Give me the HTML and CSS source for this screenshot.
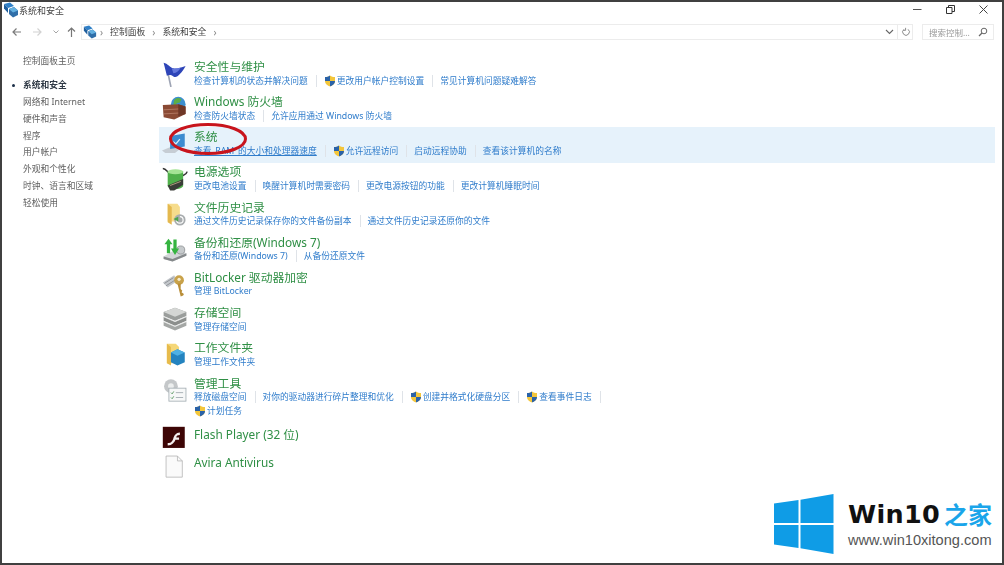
FILE: index.html
```html
<!DOCTYPE html>
<html lang="zh-CN">
<head>
<meta charset="utf-8">
<title>系统和安全</title>
<link rel="stylesheet" href="styles.css">
</head>
<body>
<svg width="0" height="0" class="defs">
  <defs>
    <symbol id="shield" viewBox="0 0 12 12">
      <path d="M6 .5C4.500 1.500 3 2 1 2v4c0 3 2.500 4.500 5 5.500 2.500-1 5-2.500 5-5.500V2C9 2 7.500 1.500 6 .5z" fill="#f3c63c"/>
      <path d="M6 .5v5.500H1V2C3 2 4.500 1.500 6 .5zM6 6h5c0 3-2.500 4.500-5 5.500z" fill="#2a62a8"/>
    </symbol>
    <symbol id="cp" viewBox="0 0 16 16">
      <path d="M1 2l6-1.500 4 3.500-6 2z" fill="#2f80c8"/>
      <path d="M1 2l4 4v5L1 6.500z" fill="#1f5f9e"/>
      <path d="M6 7l5-2 4 3.500V13l-5 2.500L6 12z" fill="#2f6ea8"/>
      <path d="M6 7l5-2 4 3.500-5 2z" fill="#63b0e0"/>
    </symbol>
  </defs>
</svg>
<div class="window">
  <header class="titlebar">
    <svg class="title-icon" width="16" height="16"><use href="#cp"/></svg>
    <span class="title-text">系统和安全</span>
    <div class="controls">
      <svg width="9" height="9" viewBox="0 0 9 9"><path d="M0 4.500h8.500" stroke="#555" fill="none"/></svg>
      <svg width="9" height="9" viewBox="0 0 9 9"><path d="M.5 2.500h5.500v6H.5zM2.500 2.500V.5h6v6H6" stroke="#333" fill="none"/></svg>
      <svg width="9" height="9" viewBox="0 0 9 9"><path d="M.5.500l8 8M8.500.500l-8 8" stroke="#444" fill="none"/></svg>
    </div>
  </header>
  <nav class="navbar">
    <svg class="nav-arrow" width="9" height="10" viewBox="0 0 9 10"><path d="M9 5H1M4.500 1.500L1 5l3.500 3.500" stroke="#7b7b7b" stroke-width="1.200" fill="none"/></svg>
    <svg class="nav-arrow dim" width="9" height="10" viewBox="0 0 9 10"><path d="M0 5h8M4.500 1.500L8 5 4.500 8.500" stroke="#d2d2d2" stroke-width="1.200" fill="none"/></svg>
    <svg class="nav-drop" width="6" height="6" viewBox="0 0 6 6"><path d="M.5 1.500L3 4l2.500-2.500" stroke="#a5a5a5" fill="none"/></svg>
    <svg class="nav-up" width="9" height="10" viewBox="0 0 9 10"><path d="M4.500 10V1M1 4.500L4.500 1 8 4.500" stroke="#777" stroke-width="1.200" fill="none"/></svg>
    <div class="address">
      <svg class="address-icon" width="14" height="14"><use href="#cp"/></svg>
      <span class="crumb-sep first">›</span>
      <span class="crumb">控制面板</span>
      <span class="crumb-sep">›</span>
      <span class="crumb">系统和安全</span>
      <span class="crumb-sep">›</span>
      <span class="address-end">
        <svg width="9" height="8" viewBox="0 0 9 8"><path d="M1 2l3.500 3.500L8 2" stroke="#666" stroke-width="1.100" fill="none"/></svg>
        <i class="address-rule"></i>
        <svg width="10" height="10" viewBox="0 0 12 12"><path d="M3.500 2.800a4 4 0 1 0 5 0M5.500 1v3H2.800" stroke="#777" fill="none"/></svg>
      </span>
    </div>
    <div class="search">
      <span>搜索控制...</span>
      <svg width="10" height="10" viewBox="0 0 10 10"><circle cx="6" cy="4" r="2.800" stroke="#666" fill="none"/><path d="M4 6L1 9" stroke="#666" stroke-width="1.300"/></svg>
    </div>
  </nav>
  <div class="content">
    <aside class="sidebar">
      <a class="side-home">控制面板主页</a>
      <ul class="side-list">
        <li class="current">系统和安全</li>
        <li>网络和 Internet</li>
        <li>硬件和声音</li>
        <li>程序</li>
        <li>用户帐户</li>
        <li>外观和个性化</li>
        <li>时钟、语言和区域</li>
        <li>轻松使用</li>
      </ul>
    </aside>
    <main class="main">
      <section class="cat">
        <svg class="cat-icon" width="26" height="26" viewBox="0 0 32 32">
          <path d="M11 32L5 4" stroke="#9ea4b4" stroke-width="2" fill="none"/>
          <path d="M2 2c5 1 8 6 12 7 4 1 9-1 15-3-2 4-4 7-7 10-3 3-5 5-8 3-3-2-5-2-8-1z" fill="#2e45b8"/>
          <path d="M12 9c3 1 7 0 11-1-2 4-5 7-9 7z" fill="#6478dc"/>
        </svg>
        <div class="cat-body">
          <h2>安全性与维护</h2>
          <div class="links"><a>检查计算机的状态并解决问题</a><a class="shielded"><svg width="12" height="12"><use href="#shield"/></svg>更改用户帐户控制设置</a><a>常见计算机问题疑难解答</a></div>
        </div>
      </section>
      <section class="cat">
        <svg class="cat-icon" width="26" height="26" viewBox="0 0 32 32">
          <circle cx="20" cy="10" r="9" fill="#3c8fd0"/>
          <path d="M15 5c3-3 6-3 9-1l-2 4-4 1-1 4-3-3z" fill="#5cae48"/>
          <path d="M1 11l19-1 9 3v9l-14 7-13-3z" fill="#8a4a34"/>
          <path d="M20 10l9 3v9l-9 3z" fill="#6e3727"/>
          <path d="M2 17l18-1M2 22l18-1" stroke="#b9806a" fill="none"/>
        </svg>
        <div class="cat-body">
          <h2>Windows 防火墙</h2>
          <div class="links"><a>检查防火墙状态</a><a>允许应用通过 Windows 防火墙</a></div>
        </div>
      </section>
      <section class="cat active">
        <svg class="cat-icon" width="26" height="26" viewBox="0 0 32 32">
          <path d="M0 24l12-5h14L16 27H4z" fill="#c6cdd4"/>
          <path d="M10 6l18-3v16l-18 3z" fill="#3d8bd0"/>
          <path d="M14 13l3 3 5-6" stroke="#d9ecfa" stroke-width="1.500" fill="none"/>
        </svg>
        <div class="cat-body">
          <h2>系统</h2>
          <div class="links"><a class="under">查看 RAM 的大小和处理器速度</a><a class="shielded"><svg width="12" height="12"><use href="#shield"/></svg>允许远程访问</a><a>启动远程协助</a><a>查看该计算机的名称</a></div>
        </div>
        <svg class="annotation" width="82" height="36" viewBox="0 0 82 36"><ellipse cx="41" cy="18" rx="37.500" ry="14.500" stroke="#c8141c" stroke-width="3" fill="none"/></svg>
      </section>
      <section class="cat">
        <svg class="cat-icon" width="26" height="26" viewBox="0 0 32 32">
          <path d="M1 3c3 0 5 3 7 5M31 7c-1 4-4 4-6 5" stroke="#333" stroke-width="1.800" fill="none"/>
          <path d="M7 6h19v19c-3 5-16 5-19 0z" fill="#4fb04a"/>
          <ellipse cx="16.500" cy="7" rx="9.500" ry="3" fill="#a4e494"/>
          <path d="M7 24l19-8v7l-11 7H10z" fill="#3a3d38"/>
          <path d="M10 24l13-5" stroke="#c8b68a" fill="none"/>
        </svg>
        <div class="cat-body">
          <h2>电源选项</h2>
          <div class="links"><a>更改电池设置</a><a>唤醒计算机时需要密码</a><a>更改电源按钮的功能</a><a>更改计算机睡眠时间</a></div>
        </div>
      </section>
      <section class="cat">
        <svg class="cat-icon" width="26" height="26" viewBox="0 0 32 32">
          <path d="M7 2h12l3 4v18H7z" fill="#f6dc8c"/>
          <path d="M7 2l5 4v22l-5-3z" fill="#e4b84e"/>
          <circle cx="22" cy="22" r="7" fill="#a8acae"/>
          <path d="M18 22a4 4 0 1 0 4-4" stroke="#fff" stroke-width="1.400" fill="none"/>
          <path d="M14 21l6-3v6z" fill="#4ca54a"/>
        </svg>
        <div class="cat-body">
          <h2>文件历史记录</h2>
          <div class="links"><a>通过文件历史记录保存你的文件备份副本</a><a>通过文件历史记录还原你的文件</a></div>
        </div>
      </section>
      <section class="cat">
        <svg class="cat-icon" width="26" height="26" viewBox="0 0 32 32">
          <path d="M2 24l15-9 13 5v3l-17 7-11-3z" fill="#d3d6d8"/>
          <path d="M2 24l11 3 17-7v3l-17 7-11-3z" fill="#85898b"/>
          <circle cx="23" cy="16" r="5" fill="#c6cacc" stroke="#8c9092"/>
          <path d="M8 2l-5 7h3v11h4V9h3zM14 3v11h-3l5 8 5-8h-3V3z" fill="#35b440"/>
        </svg>
        <div class="cat-body">
          <h2>备份和还原(Windows 7)</h2>
          <div class="links"><a>备份和还原(Windows 7)</a><a>从备份还原文件</a></div>
        </div>
      </section>
      <section class="cat">
        <svg class="cat-icon" width="26" height="26" viewBox="0 0 32 32">
          <path d="M1 13l14-9 4 7-12 8z" fill="#c4c8cc"/>
          <path d="M3 14l11-7M5 17l11-7" stroke="#84888c" fill="none"/>
          <circle cx="21" cy="10" r="6" fill="#c9a24a"/>
          <path d="M19 14l4 16 3-1 1-2-3-2 1-2-2-2 0-7z" fill="#b98e38"/>
          <circle cx="21" cy="9" r="2" fill="#f6eecf"/>
        </svg>
        <div class="cat-body">
          <h2>BitLocker 驱动器加密</h2>
          <div class="links"><a>管理 BitLocker</a></div>
        </div>
      </section>
      <section class="cat">
        <svg class="cat-icon" width="26" height="26" viewBox="0 0 32 32">
          <path d="M2 6l14-5 14 5v5l-14 6-14-6z" fill="#9a9d9b"/>
          <path d="M2 6l14-5 14 5-14 6z" fill="#d4d6d4"/>
          <path d="M2 12l14 6 14-6v5l-14 6-14-6z" fill="#8c8f8d"/>
          <path d="M2 18l14 6 14-6v5l-14 6-14-6z" fill="#a4a7a5"/>
          <path d="M2 12l14 6 14-6M2 18l14 6 14-6" stroke="#e6e8e6" fill="none"/>
        </svg>
        <div class="cat-body">
          <h2>存储空间</h2>
          <div class="links"><a>管理存储空间</a></div>
        </div>
      </section>
      <section class="cat">
        <svg class="cat-icon" width="26" height="26" viewBox="0 0 32 32">
          <path d="M6 2h11l4 4v20H6z" fill="#f5d778"/>
          <path d="M6 2l5 4v23l-5-3z" fill="#e7bb4c"/>
          <path d="M11 13l8-4 9 4v12l-9 4-8-4z" fill="#2483bf"/>
          <path d="M11 13l8-4 9 4-9 4z" fill="#4eb0e3"/>
        </svg>
        <div class="cat-body">
          <h2>工作文件夹</h2>
          <div class="links"><a>管理工作文件夹</a></div>
        </div>
      </section>
      <section class="cat tools">
        <svg class="cat-icon" width="26" height="26" viewBox="0 0 32 32">
          <circle cx="11" cy="10" r="8.500" fill="#c4c7c9"/>
          <circle cx="11" cy="10" r="3.500" fill="#eceeee"/>
          <rect x="8.500" y="12.500" width="21" height="16" fill="#f7f8f8" stroke="#a2acb2"/>
          <path d="M11 18l1.500 1.500 2-3M11 24l1.500 1.500 2-3" stroke="#4a8f50" fill="none"/>
          <path d="M17 18h9M17 24h9" stroke="#9aa4aa" fill="none"/>
        </svg>
        <div class="cat-body">
          <h2>管理工具</h2>
          <div class="links"><a>释放磁盘空间</a><a>对你的驱动器进行碎片整理和优化</a><a class="shielded"><svg width="12" height="12"><use href="#shield"/></svg>创建并格式化硬盘分区</a><a class="shielded"><svg width="12" height="12"><use href="#shield"/></svg>查看事件日志</a><a class="tail"></a></div>
          <div class="links"><a class="shielded"><svg width="12" height="12"><use href="#shield"/></svg>计划任务</a></div>
        </div>
      </section>
      <section class="cat single">
        <svg class="cat-icon" width="26" height="26" viewBox="0 0 32 32">
          <rect x="1" y="1" width="27" height="26" fill="#3d0505"/>
          <path d="M7 21c5 0 6-3 7-6s3-7 8-7v3c-3 0-4 1-4.500 3H21v3h-4.500c-1 3-4 7-9.500 7z" fill="#f4eeee"/>
        </svg>
        <div class="cat-body">
          <h2>Flash Player (32 位)</h2>
        </div>
      </section>
      <section class="cat single">
        <svg class="cat-icon" width="26" height="26" viewBox="0 0 32 32">
          <path d="M5 2.500h14l6 6v20H5z" fill="#fafafa" stroke="#b5b5b5"/>
          <path d="M19 2.500v6h6" fill="none" stroke="#b5b5b5"/>
        </svg>
        <div class="cat-body">
          <h2>Avira Antivirus</h2>
        </div>
      </section>
    </main>
  </div>
  <aside class="watermark">
    <svg width="60" height="60" viewBox="0 0 60 60">
      <path d="M0 9.500L24.500 6v23H0zM26.500 5.700L59.500 0v29h-33zM0 31h24.500v23L0 50.500zM26.500 31h33v29l-33-5.700z" fill="#0f9ce6"/>
    </svg>
    <div class="wm-text">
      <div class="wm-title"><span>Win10</span><b>之家</b></div>
      <div class="wm-url">www.win10xitong.com</div>
    </div>
  </aside>
</div>
</body>
</html>
```
FILE: styles.css
```css
* { box-sizing: border-box; }
html, body { margin: 0; padding: 0; width: 1004px; height: 565px; overflow: hidden; background: #fff; }
body { font-family: "Noto Sans", "Noto Sans CJK SC", sans-serif; color: #444; }
.defs { position: absolute; }
a { display: block; }
.window { position: relative; width: 1004px; height: 565px; border: 2px solid #404040; background: #fff; display: flex; flex-direction: column; overflow: hidden; }

.titlebar { height: 21px; flex: none; display: flex; align-items: center; padding: 0 0 5px 1px; filter: blur(.3px); }
.title-icon { flex: none; }
.title-text { font-size: 9px; color: #444; }
.controls { margin-left: auto; margin-bottom: 1px; display: flex; align-items: center; gap: 24px; padding-right: 14px; }

.navbar { height: 17px; flex: none; display: flex; align-items: center; padding-left: 10px; filter: blur(.3px); }
.nav-arrow { flex: none; }
.nav-arrow.dim { margin-left: 12px; }
.nav-drop { margin-left: 11px; }
.nav-up { margin-left: 8px; }
.address { width: 832px; height: 16px; margin-left: 5px; display: flex; align-items: center; border: 1px solid #ececec; font-size: 8.800px; color: #444; }
.address-icon { margin-left: 1px; }
.crumb-sep { color: #888; font-size: 10px; margin: 0 7px; }
.crumb-sep.first { margin: 0 7px 0 3px; }
.address-end { margin-left: auto; display: flex; align-items: center; padding-right: 1px; }
.address-rule { width: 1px; height: 14px; margin: 0 3px; background: #ececec; }
.search { width: 72px; height: 16px; margin-left: 9px; display: flex; align-items: center; justify-content: space-between; padding: 0 5px 0 6px; border: 1px solid #ececec; font-size: 8.500px; color: #999; }

.content { flex: 1; display: flex; min-height: 0; filter: blur(.3px); }
.sidebar { width: 157px; flex: none; padding: 13px 0 0 21px; font-size: 8.750px; color: #5f5f5f; }
.side-home { line-height: 17px; }
.side-list { list-style: none; margin: 7px 0 0; padding: 0; }
.side-list li { position: relative; line-height: 16.850px; white-space: nowrap; }
.side-list .current { color: #303a46; font-weight: bold; }
.side-list .current::before { content: ""; position: absolute; left: -11px; top: 7px; width: 3px; height: 3px; border-radius: 50%; background: #1c3048; }

.main { flex: 1; padding-top: 17px; min-width: 0; }
.cat { position: relative; width: 836px; height: 35.200px; display: flex; align-items: flex-start; padding-left: 3px; }
.cat-icon { flex: none; margin-top: 4px; }
.cat-body { margin-left: 6px; padding-top: 2px; min-width: 0; }
.cat h2 { margin: 0; font-size: 11.800px; font-weight: normal; line-height: 14.500px; color: #2f8f45; white-space: nowrap; }
.links { display: flex; align-items: center; height: 14px; font-size: 8.750px; color: #2f7ccb; white-space: nowrap; }
.links a { display: flex; align-items: center; line-height: 12px; }
.links a + a { margin-left: 8px; padding-left: 7px; border-left: 1px solid #dfe3e8; }
.links .shielded svg { margin-right: 1px; }
.links .under { text-decoration: underline; word-spacing: 1.500px; }
.links .tail { height: 12px; }
.active { background: #e6f2fb; height: 36px; }
.active + .cat { margin-top: -1px; }
.tools { height: 51px; }
.single { height: 28px; }
.single .cat-icon { margin-top: 1px; }
.annotation { position: absolute; left: 8px; top: -6px; }

.watermark { position: absolute; right: 0; bottom: 0; width: 230px; height: 79px; background: #fff; display: flex; align-items: center; padding-left: 2px; }
.wm-text { margin-left: 14px; }
.wm-title { display: flex; align-items: center; height: 30px; }
.wm-title span { font-family: "DejaVu Sans", sans-serif; font-size: 25.500px; font-weight: bold; color: #111; line-height: 30px; letter-spacing: .3px; }
.wm-title b { font-family: "Noto Sans CJK SC", sans-serif; font-size: 24px; color: #1aa5ea; margin-left: 4px; line-height: 30px; }
.wm-url { font-family: "Liberation Sans", sans-serif; font-size: 14.600px; line-height: 16px; color: #555; margin-top: 3px; }
```
